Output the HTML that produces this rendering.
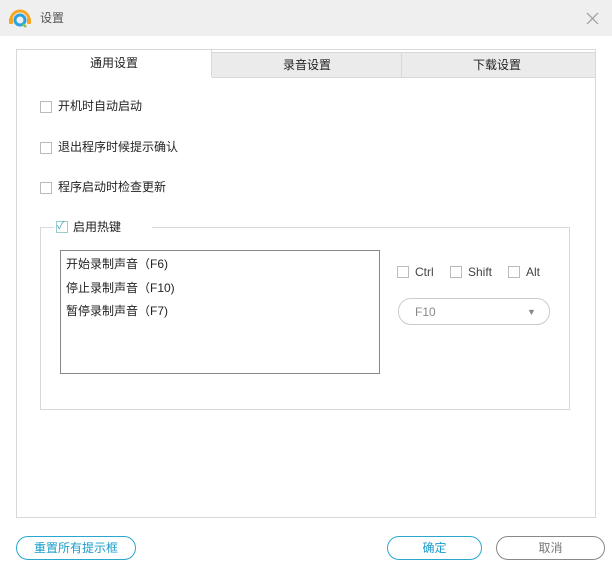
<html><head><style>
body{margin:0;width:612px;height:584px;background:#fff;font-family:"Liberation Sans","Noto Sans CJK SC",sans-serif;font-size:12px;color:#222;position:relative;overflow:hidden}
.a{position:absolute}
.cb{position:absolute;width:10px;height:10px;border:1px solid #bbb;background:#fff}
.t{position:absolute;font-size:12px;line-height:14px}
.btn{position:absolute;height:22px;border:1px solid #2aa7cf;border-radius:12px;color:#1a9ccb;text-align:center;line-height:22px;font-size:12px}
</style></head><body>
<div class="a" style="left:0;top:0;width:612px;height:36px;background:#efefef"></div>
<svg class="a" style="left:7px;top:6px" width="26" height="24" viewBox="0 0 26 24"><path d="M4 14 A9 9 0 0 1 22 14" stroke="#f6a623" stroke-width="3" fill="none"/><circle cx="13" cy="14" r="5" stroke="#2aa2e0" stroke-width="3" fill="none"/><rect x="2" y="12" width="4" height="6" rx="1" fill="#f6a623"/><rect x="20" y="12" width="4" height="6" rx="1" fill="#f6a623"/><path d="M16 18l3 3" stroke="#8bc34a" stroke-width="2.5"/></svg>
<div class="t" style="left:40px;top:11px;color:#555">设置</div>
<svg class="a" style="left:586px;top:12px" width="13" height="13"><path d="M1 1L12 12M12 1L1 12" stroke="#999" stroke-width="1.2"/></svg>
<div class="a" style="left:16px;top:49px;width:578px;height:467px;border:1px solid #d8d8d8"></div>
<div class="a" style="left:212px;top:52px;width:383px;height:24px;background:#ebebeb;border:1px solid #d8d8d8;border-left:none"></div>
<div class="a" style="left:401px;top:52px;width:1px;height:25px;background:#d8d8d8"></div>
<div class="a" style="left:211px;top:49px;width:1px;height:28px;background:#d8d8d8"></div>
<div class="a" style="left:17px;top:50px;width:194px;height:28px;background:#fff"></div>
<div class="t" style="left:90px;top:56px">通用设置</div>
<div class="t" style="left:283px;top:58px">录音设置</div>
<div class="t" style="left:473px;top:58px">下载设置</div>
<div class="cb" style="left:40px;top:101px"></div><div class="t" style="left:58px;top:99px">开机时自动启动</div>
<div class="cb" style="left:40px;top:142px"></div><div class="t" style="left:58px;top:140px">退出程序时候提示确认</div>
<div class="cb" style="left:40px;top:182px"></div><div class="t" style="left:58px;top:180px">程序启动时检查更新</div>
<div class="a" style="left:40px;top:227px;width:528px;height:181px;border:1px solid #d8d8d8"></div>
<div class="a" style="left:54px;top:219px;width:98px;height:16px;background:#fff"></div>
<div class="cb" style="left:56px;top:221px;border-color:#9cc"></div><div class="t" style="left:57px;top:219px;color:#5ab;font-size:11px">✓</div>
<div class="t" style="left:73px;top:220px">启用热键</div>
<div class="a" style="left:60px;top:250px;width:318px;height:122px;border:1px solid #888"></div>
<div class="t" style="left:66px;top:257px">开始录制声音（F6)</div>
<div class="t" style="left:66px;top:281px">停止录制声音（F10)</div>
<div class="t" style="left:66px;top:304px">暂停录制声音（F7)</div>
<div class="cb" style="left:397px;top:266px"></div><div class="t" style="left:415px;top:265px;color:#444">Ctrl</div>
<div class="cb" style="left:450px;top:266px"></div><div class="t" style="left:468px;top:265px;color:#444">Shift</div>
<div class="cb" style="left:508px;top:266px"></div><div class="t" style="left:526px;top:265px;color:#444">Alt</div>
<div class="a" style="left:398px;top:298px;width:150px;height:25px;border:1px solid #ccc;border-radius:13px"></div>
<div class="t" style="left:415px;top:305px;color:#888">F10</div>
<div class="t" style="left:527px;top:305px;color:#888;font-size:9px">▼</div>
<div class="btn" style="left:16px;top:536px;width:118px">重置所有提示框</div>
<div class="btn" style="left:387px;top:536px;width:93px">确定</div>
<div class="btn" style="left:496px;top:536px;width:107px;border-color:#888;color:#777">取消</div>
</body></html>
